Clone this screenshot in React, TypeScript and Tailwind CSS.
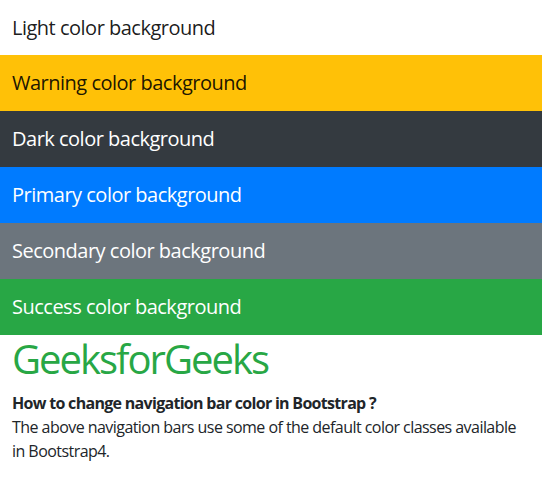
export default function App() {
  const rows = [
    { t: "Light color background", c: "h-[55px] bg-white text-[rgba(0,0,0,0.9)]" },
    { t: "Warning color background", c: "h-[56px] bg-[#ffc107] text-[rgba(0,0,0,0.9)]" },
    { t: "Dark color background", c: "h-[56px] bg-[#343a40] text-white" },
    { t: "Primary color background", c: "h-[56px] bg-[#007bff] text-white" },
    { t: "Secondary color background", c: "h-[56px] bg-[#6c757d] text-white" },
    { t: "Success color background", c: "h-[56px] bg-[#28a745] text-white" },
  ];
  return (
    <div className="w-[542px] min-h-[497px] bg-white font-['Open_Sans',sans-serif]">
      {rows.map((r) => (
        <div key={r.t} className={`flex items-center px-[12px] ${r.c}`}>
          <span className="text-[20px] leading-[30px] tracking-[-0.5px]">{r.t}</span>
        </div>
      ))}
      <div className="px-[12px] text-[#212529]">
        <h1 className="text-[40px] leading-[48px] font-medium tracking-[-2px] text-[#28a745] mb-[8px]">GeeksforGeeks</h1>
        <div className="text-[16px] leading-[24px] font-bold tracking-[-0.7px]">How to change navigation bar color in Bootstrap ?</div>
        <p className="max-w-[505px] text-[16px] leading-[24px] tracking-[-0.55px]">
          The above navigation bars use some of the default color classes available in Bootstrap4.
        </p>
      </div>
    </div>
  );
}
